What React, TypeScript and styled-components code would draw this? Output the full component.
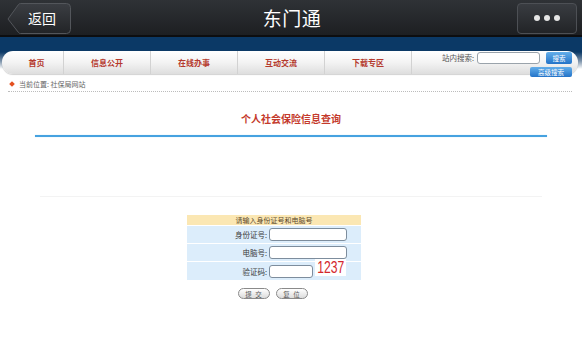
import React from "react";
import styled, { createGlobalStyle } from "styled-components";

const navItems = ["首页", "信息公开", "在线办事", "互动交流", "下载专区"];

const formRows = [
  { label: "身份证号:", width: 78 },
  { label: "电脑号:", width: 78 },
];

function App() {
  return (
    <>
      <GlobalStyle />
      <TopBar>
        <BackButton>
          <svg width="64" height="31" viewBox="0 0 64 31">
            <defs>
              <linearGradient id="backFill" x1="0" y1="0" x2="0" y2="1">
                <stop offset="0" stopColor="#3b3e43" />
                <stop offset="1" stopColor="#222427" />
              </linearGradient>
            </defs>
            <path
              d="M1 16 L11.5 1.5 Q12.3 0.5 13.5 0.5 L59.5 0.5 Q63.5 0.5 63.5 4.5 L63.5 26.5 Q63.5 30.5 59.5 30.5 L13.5 30.5 Q12.3 30.5 11.5 29.5 Z"
              fill="url(#backFill)"
              stroke="#53565b"
              strokeWidth="1"
            />
          </svg>
          <BackLabel>返回</BackLabel>
        </BackButton>
        <Title>东门通</Title>
        <MoreButton>
          <Dot />
          <Dot />
          <Dot />
        </MoreButton>
      </TopBar>

      <Band>
        <NavBar>
          {navItems.map((item, i) => (
            <NavItem key={item} $first={i === 0}>
              {item}
            </NavItem>
          ))}
          <SearchArea>
            <SearchRow>
              <SearchLabel>站内搜索:</SearchLabel>
              <SearchInput />
              <BlueButton $width={26}>搜索</BlueButton>
            </SearchRow>
            <BlueButton $width={42}>高级搜索</BlueButton>
          </SearchArea>
        </NavBar>
      </Band>

      <Breadcrumb>
        <Diamond />
        <span>当前位置: 社保局网站</span>
      </Breadcrumb>

      <PageTitle>个人社会保险信息查询</PageTitle>
      <BlueRule />
      <FaintRule />

      <FormBox>
        <FormHead>请输入身份证号和电脑号</FormHead>
        {formRows.map((row) => (
          <FormRow key={row.label}>
            <FieldLabel>{row.label}</FieldLabel>
            <TextInput $width={row.width} />
          </FormRow>
        ))}
        <FormRow $tall>
          <FieldLabel>验证码:</FieldLabel>
          <CaptchaCell>
            <TextInput $width={44} />
            <Captcha>
              <span>1237</span>
            </Captcha>
          </CaptchaCell>
        </FormRow>
      </FormBox>

      <Actions>
        <PillButton>提 交</PillButton>
        <PillButton>复 位</PillButton>
      </Actions>
    </>
  );
}

const GlobalStyle = createGlobalStyle`
  html, body {
    margin: 0;
    padding: 0;
    background: #fff;
  }
  body {
    width: 582px;
    height: 364px;
    overflow: hidden;
    font-family: "Noto Sans CJK SC", "Noto Sans", sans-serif;
  }
`;

const TopBar = styled.div`
  display: grid;
  grid-template-columns: 1fr auto 1fr;
  align-items: center;
  height: 35px;
  padding: 0 5px 0 7px;
  background: linear-gradient(#2f3236, #1d1f22);
  border-bottom: 2px solid #0d0e10;
`;

const BackButton = styled.div`
  position: relative;
  justify-self: start;
  width: 64px;
  height: 31px;
  margin-top: 1px;

  svg {
    position: absolute;
    left: 0;
    top: 0;
  }
`;

const BackLabel = styled.span`
  position: relative;
  display: flex;
  align-items: center;
  justify-content: center;
  height: 100%;
  padding-left: 6px;
  color: #fff;
  font-size: 14px;
`;

const Title = styled.div`
  color: #fff;
  font-size: 19px;
  letter-spacing: 0.5px;
`;

const MoreButton = styled.div`
  justify-self: end;
  display: flex;
  align-items: center;
  justify-content: center;
  gap: 4px;
  width: 60px;
  height: 31px;
  margin-top: 1px;
  box-sizing: border-box;
  border: 1px solid #4d5055;
  border-radius: 4px;
  background: linear-gradient(#393c41, #222427);
`;

const Dot = styled.span`
  width: 6px;
  height: 6px;
  border-radius: 50%;
  background: #e6e6e6;
`;

const Band = styled.div`
  padding: 14px 4px 0 2px;
  background: linear-gradient(#0b3966 0, #0b3966 15px, #7d93ab 24px, #fff 32px);
`;

const NavBar = styled.div`
  display: flex;
  align-items: stretch;
  height: 23px;
  padding: 0 6px 0 8px;
  border-radius: 11px;
  background: linear-gradient(#ffffff, #f3f3f3 50%, #dedede);
  box-shadow: 0 1px 1px rgba(0, 0, 0, 0.18);
`;

const NavItem = styled.div<{ $first?: boolean }>`
  display: flex;
  align-items: center;
  justify-content: center;
  width: ${(p) => (p.$first ? 53 : 86)}px;
  border-right: 1px solid #d2d2d2;
  color: #b53a2e;
  font-size: 8px;
  font-weight: bold;
`;

const SearchArea = styled.div`
  margin-left: auto;
  display: flex;
  flex-direction: column;
  align-items: flex-end;
  gap: 3px;
  padding-top: 1px;
`;

const SearchRow = styled.div`
  display: flex;
  align-items: flex-start;
`;

const SearchLabel = styled.span`
  margin: 1px 3px 0 0;
  color: #555;
  font-size: 7.5px;
  line-height: 10px;
`;

const SearchInput = styled.div`
  width: 63px;
  height: 12px;
  box-sizing: border-box;
  border: 1px solid #9aa3ab;
  border-radius: 3px;
  background: #fff;
`;

const BlueButton = styled.div<{ $width: number }>`
  display: flex;
  align-items: center;
  justify-content: center;
  width: ${(p) => p.$width}px;
  height: 12px;
  margin-left: 6px;
  border-radius: 2px;
  background: linear-gradient(#63aeea, #2373c8);
  color: #fff;
  font-size: 6.5px;
`;

const Breadcrumb = styled.div`
  display: flex;
  align-items: center;
  gap: 5px;
  height: 18px;
  box-sizing: border-box;
  margin: 0 10px 0 8px;
  padding: 2px 0 0 2px;
  border-bottom: 1px dotted #bcbcbc;
  color: #666;
  font-size: 7px;
`;

const Diamond = styled.span`
  width: 4px;
  height: 4px;
  background: #e4501f;
  transform: rotate(45deg);
`;

const PageTitle = styled.div`
  margin-top: 21px;
  text-align: center;
  color: #c43a2c;
  font-size: 10px;
  font-weight: bold;
  line-height: 12px;
`;

const BlueRule = styled.div`
  height: 2px;
  margin: 10px 35px 0;
  background: #46a2e0;
  box-shadow: 0 0 1px #9cd0f2;
`;

const FaintRule = styled.div`
  height: 1px;
  margin: 59px 40px 0;
  background: #f3f3f3;
`;

const FormBox = styled.div`
  display: flex;
  flex-direction: column;
  gap: 1px;
  width: 174px;
  margin: 18px 0 0 187px;
`;

const FormHead = styled.div`
  height: 10px;
  background: #fbe7b3;
  color: #5b4a2c;
  font-size: 7px;
  line-height: 10px;
  text-align: center;
`;

const FormRow = styled.div<{ $tall?: boolean }>`
  display: grid;
  grid-template-columns: 82px 1fr;
  align-items: ${(p) => (p.$tall ? "start" : "center")};
  height: ${(p) => (p.$tall ? 18 : 17)}px;
  background: #dcedfb;
`;

const FieldLabel = styled.div`
  align-self: center;
  padding-right: 2px;
  text-align: right;
  color: #3a3a3a;
  font-size: 7.5px;
`;

const TextInput = styled.div<{ $width: number }>`
  width: ${(p) => p.$width}px;
  height: 13px;
  box-sizing: border-box;
  border: 1px solid #7d8d9d;
  border-radius: 3px;
  background: #fff;
`;

const CaptchaCell = styled.div`
  display: flex;
  align-items: flex-start;
  gap: 2px;
  height: 100%;

  & > ${TextInput} {
    margin-top: 3px;
  }
`;

const Captcha = styled.div`
  width: 31px;
  height: 17px;
  margin-top: -3px;
  background: #fff;

  span {
    display: block;
    padding-left: 3px;
    color: #d3262c;
    font-family: "Liberation Sans", Arial, sans-serif;
    font-size: 16px;
    line-height: 17px;
    transform: scaleX(0.76);
    transform-origin: left center;
  }
`;

const Actions = styled.div`
  display: flex;
  gap: 6px;
  margin: 8px 0 0 238px;
`;

const PillButton = styled.div`
  display: flex;
  align-items: center;
  justify-content: center;
  width: 32px;
  height: 11px;
  box-sizing: border-box;
  border: 1px solid #8a8a8a;
  border-radius: 6px;
  background: linear-gradient(#ffffff, #dcdcdc);
  color: #555;
  font-size: 6.5px;
  letter-spacing: 1px;
  white-space: pre;
`;

export default App;
